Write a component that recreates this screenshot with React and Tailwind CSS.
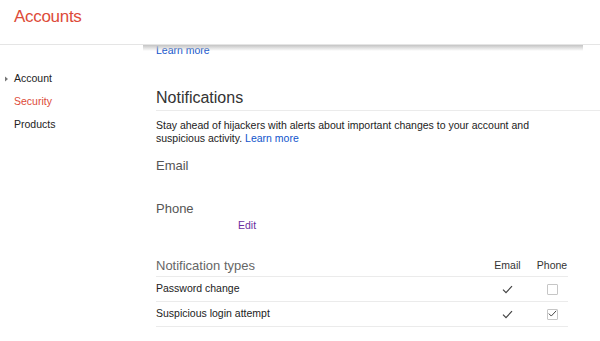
import React from 'react';

const Check = ({ className = '' }) => (
  <svg width="11" height="9" viewBox="0 0 11 9" className={className}>
    <path d="M1 4.6 L4 7.6 L10 1.2" fill="none" stroke="#444" strokeWidth="1.2" />
  </svg>
);

const Checkbox = ({ checked }) => (
  <div className="w-[11px] h-[11px] border border-[#c6c6c6] rounded-[1px] bg-white flex items-center justify-center mx-auto">
    {checked && <Check className="-mt-[1px]" />}
  </div>
);

const rows = [
  { name: 'Password change', email: true, phone: false },
  { name: 'Suspicious login attempt', email: true, phone: true },
];

const App = () => {
  return (
    <div className="w-[600px] h-[341px] overflow-hidden bg-white text-[#222] font-['Liberation_Sans',Arial,sans-serif]">
      {/* Header */}
      <div className="h-[45px] border-b border-[#e5e5e5] pl-[14px] pt-[6px]">
        <h1 className="text-[17px] leading-[22px] text-[#dd4b39] tracking-[-0.3px]">Accounts</h1>
      </div>

      <div className="flex">
        {/* Sidebar */}
        <nav className="w-[143px] shrink-0 pt-[22px] text-[10.5px] leading-[23px]">
          <div className="flex items-center">
            <svg width="14" height="6" viewBox="0 0 14 6">
              <path d="M5 0.5 L8 3 L5 5.5 Z" fill="#777" />
            </svg>
            <span>Account</span>
          </div>
          <div className="pl-[14px] text-[#dd4b39]">Security</div>
          <div className="pl-[14px]">Products</div>
        </nav>

        {/* Main */}
        <main className="relative flex-1 pl-[13px]">
          <div className="absolute left-0 top-0 w-[440px] h-[6px] bg-gradient-to-b from-[#c4c4c4] to-transparent" />
          <a className="block text-[10.5px] leading-[11px] text-[#15c]">Learn more</a>

          <h2 className="mt-[32px] text-[16px] leading-[20px] pb-[2px] text-[#333] border-b border-[#ebebeb]">
            Notifications
          </h2>
          <p className="mt-[8px] text-[10.5px] leading-[13px] w-[390px]">
            Stay ahead of hijackers with alerts about important changes to your account and suspicious activity.{' '}
            <a className="text-[#15c]">Learn more</a>
          </p>

          <div className="mt-[13px] text-[13px] leading-[16px] text-[#555]">Email</div>
          <div className="mt-[27px] text-[13px] leading-[16px] text-[#555]">Phone</div>
          <a className="block mt-[2px] ml-[82px] text-[10.5px] leading-[13px] text-[#6b2fa0]">Edit</a>

          {/* Notification types table */}
          <div className="mt-[23px] w-[412px]">
            <div className="flex items-center h-[22px] border-b border-[#ebebeb]">
              <div className="flex-1 text-[13px] text-[#666]">Notification types</div>
              <div className="w-[57px] text-center text-[10.5px] text-[#333]">Email</div>
              <div className="w-[32px] text-center text-[10.5px] text-[#333]">Phone</div>
            </div>
            {rows.map((r) => (
              <div key={r.name} className="flex items-center h-[25px] border-b border-[#ebebeb] text-[10.5px]">
                <div className="flex-1">{r.name}</div>
                <div className="w-[57px] flex justify-center">{r.email && <Check />}</div>
                <div className="w-[32px]">
                  <Checkbox checked={r.phone} />
                </div>
              </div>
            ))}
          </div>
        </main>
      </div>
    </div>
  );
};

export default App;
